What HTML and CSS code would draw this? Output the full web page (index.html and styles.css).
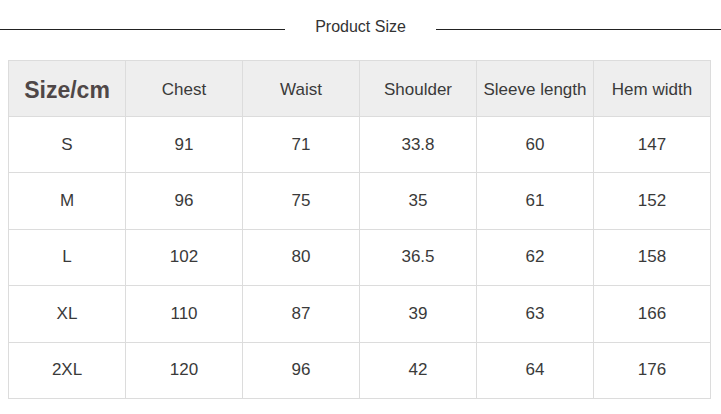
FILE: index.html
```html
<!DOCTYPE html>
<html>
<head>
<meta charset="utf-8">
<link rel="stylesheet" href="styles.css">
</head>
<body>
<div class="title-row">
  <span class="rule"></span>
  <span class="title">Product Size</span>
  <span class="rule"></span>
</div>
<table class="size-table">
  <thead>
    <tr>
      <th class="first">Size/cm</th>
      <th>Chest</th>
      <th>Waist</th>
      <th>Shoulder</th>
      <th>Sleeve length</th>
      <th>Hem width</th>
    </tr>
  </thead>
  <tbody>
    <tr><td>S</td><td>91</td><td>71</td><td>33.8</td><td>60</td><td>147</td></tr>
    <tr><td>M</td><td>96</td><td>75</td><td>35</td><td>61</td><td>152</td></tr>
    <tr><td>L</td><td>102</td><td>80</td><td>36.5</td><td>62</td><td>158</td></tr>
    <tr><td>XL</td><td>110</td><td>87</td><td>39</td><td>63</td><td>166</td></tr>
    <tr><td>2XL</td><td>120</td><td>96</td><td>42</td><td>64</td><td>176</td></tr>
  </tbody>
</table>
</body>
</html>
```
FILE: styles.css
```css
html, body {
  margin: 0;
  padding: 0;
  background: #fff;
  font-family: "Liberation Sans", Arial, sans-serif;
}
.title-row {
  display: flex;
  align-items: center;
  height: 44px;
  padding-top: 15px;
  box-sizing: border-box;
  margin-bottom: 16px;
}
.rule {
  height: 1px;
  background: #222;
}
.rule:first-child {
  width: 285px;
}
.rule:last-child {
  flex: 1;
}
.title {
  width: 151px;
  text-align: center;
  font-size: 16px;
  color: #333;
  line-height: 20px;
  margin-top: -6px;
}
.size-table {
  margin-left: 8px;
  width: 703px;
  border-collapse: collapse;
  table-layout: fixed;
}
.size-table th,
.size-table td {
  border: 1px solid #dcdcdc;
  text-align: center;
  padding: 0;
  color: #3a3a3a;
  font-size: 17px;
}
.size-table th {
  background: #eeeeee;
  font-weight: normal;
  height: 52px;
  padding-top: 3px;
}
.size-table th.first {
  font-weight: bold;
  font-size: 23px;
  color: #4f4747;
}
.size-table td {
  height: 55.4px;
}
```
